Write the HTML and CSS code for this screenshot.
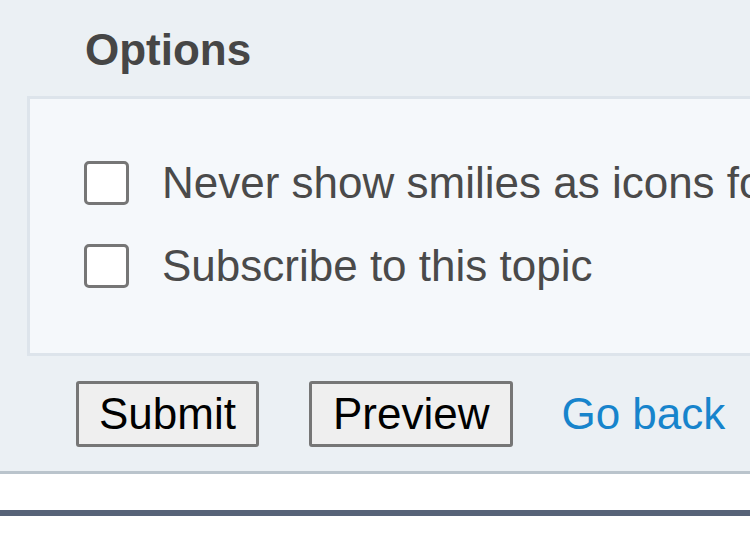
FILE: index.html
```html
<!DOCTYPE html>
<html lang="en">
<head>
  <meta charset="UTF-8" />
  <meta name="viewport" content="width=device-width, initial-scale=1" />
  <title>Post a reply</title>
  <link rel="stylesheet" href="styles.css">
</head>
<body>
  <div class="post-form">
    <h3 class="section-title">Options</h3>

    <fieldset class="options-panel">
      <label class="option-row">
        <input type="checkbox" name="disable_smilies" />
        <span>Never show smilies as icons for this post</span>
      </label>
      <label class="option-row">
        <input type="checkbox" name="notify" />
        <span>Subscribe to this topic</span>
      </label>
    </fieldset>

    <div class="actions">
      <button type="submit" class="btn">Submit</button>
      <button type="button" class="btn">Preview</button>
      <a href="#" class="go-back">Go back</a>
    </div>
  </div>

  <div class="page-gap"></div>
  <div class="footer-bar"></div>
</body>
</html>
```

FILE: styles.css
```css
* {
  box-sizing: border-box;
}
body {
  margin: 0;
  background: #fff;
  font-family: 'Liberation Sans', Arial, sans-serif;
  overflow: hidden;
}
.post-form {
  background: #ebf0f4;
  border-bottom: 3px solid #bac4cc;
  padding: 25px 0 24px;
}
.section-title {
  margin: 0 0 22px 85px;
  font-size: 44px;
  line-height: 49px;
  font-weight: 700;
  color: #464646;
}
.options-panel {
  margin: 0 0 0 27px;
  border: 3px solid #dde4eb;
  border-right: none;
  background: #f5f8fb;
  padding: 59px 0 63px 54px;
  display: flex;
  flex-direction: column;
  gap: 34px;
  min-width: 0;
}
.option-row {
  display: flex;
  align-items: center;
  gap: 33px;
  height: 49px;
  font-size: 44px;
  line-height: 49px;
  color: #4a4a4a;
  white-space: nowrap;
}
.option-row input {
  appearance: none;
  -webkit-appearance: none;
  flex: none;
  margin: 0;
  width: 45px;
  height: 44px;
  border: 3px solid #767676;
  border-radius: 5px;
  background: #fff;
}
.actions {
  display: flex;
  align-items: center;
  gap: 50px;
  margin: 25px 0 0 76px;
}
.btn {
  height: 66px;
  padding: 0 21px;
  border: 3px solid #767676;
  border-radius: 3px;
  background: #efefef;
  color: #000;
  font-family: inherit;
  font-size: 44px;
  line-height: 1;
  cursor: pointer;
}
.btn:first-child {
  padding: 0 20px;
}
.go-back {
  margin-left: -2px;
  font-size: 44px;
  color: #1784cc;
  text-decoration: none;
}
.page-gap {
  height: 36px;
}
.footer-bar {
  height: 6px;
  background: #576378;
}
```
